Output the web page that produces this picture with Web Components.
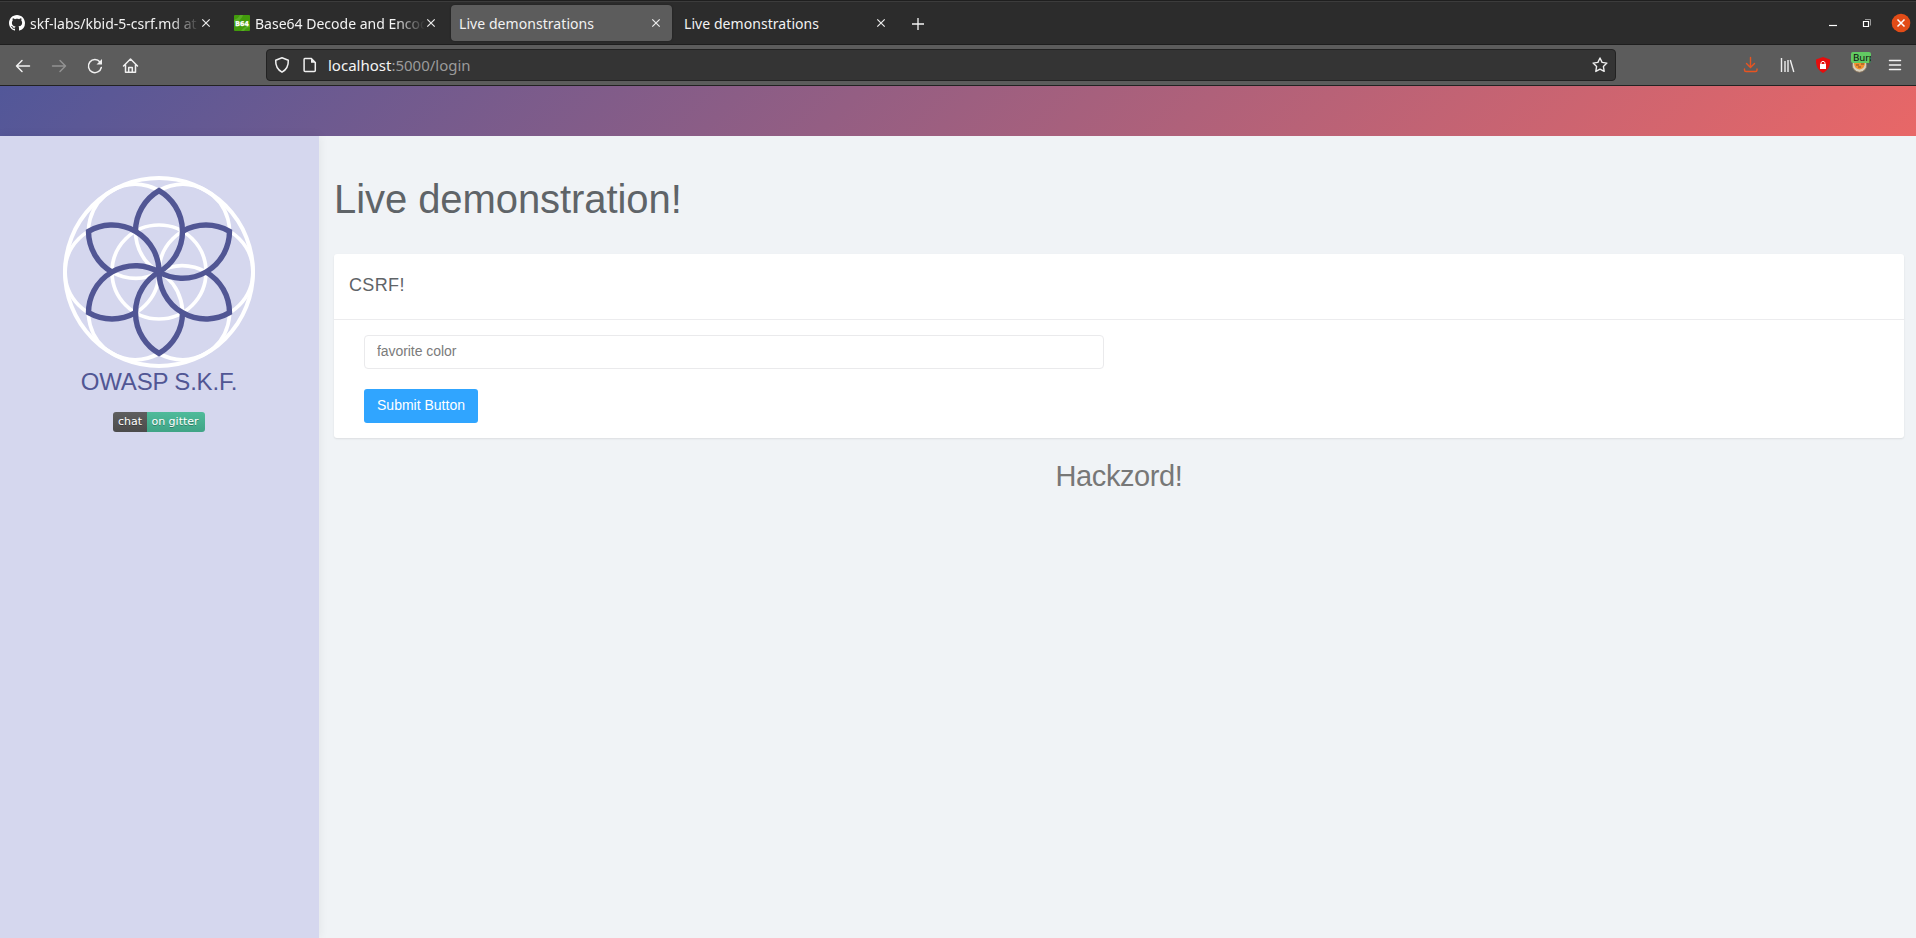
<!DOCTYPE html>
<html lang="en">
<head>
<meta charset="utf-8">
<title>Live demonstrations</title>
<style>
html, body { margin: 0; height: 100%; overflow: hidden; }
body { font-family: "Liberation Sans", Arial, sans-serif; background: #f0f3f6; }
</style>
</head>
<body>
<demo-window></demo-window>
<script>
const define = (name, html) => {
  const t = document.createElement('template');
  t.innerHTML = html;
  customElements.define(name, class extends HTMLElement {
    constructor() {
      super();
      this.attachShadow({ mode: 'open' }).append(t.content.cloneNode(true));
    }
  });
};

define('browser-tab', `
<style>
:host { display: flex; align-items: center; box-sizing: border-box; width: 221px; height: 36px; padding: 0 8px; margin-right: 4px; border-radius: 4px; color: #f2f2f2; font: 14px "Noto Sans", "Open Sans", sans-serif; }
:host([active]) { background: #5c5c5c; box-shadow: 0 0 2px #1c1c1c; }
.label { flex: 1; overflow: hidden; white-space: nowrap; line-height: 20px; padding-top: 2px; letter-spacing: var(--ls, .06px); }
:host([fade]) .label { margin-right: -2px; -webkit-mask-image: linear-gradient(to right, #000 calc(100% - 30px), transparent); mask-image: linear-gradient(to right, #000 calc(100% - 30px), transparent); }
svg { flex: none; display: block; }
</style>
<slot name="icon"></slot>
<span class="label"><slot></slot></span>
<svg width="16" height="16" viewBox="0 0 16 16"><path d="M4.300 4.300l7.400 7.400M11.700 4.300l-7.400 7.400" stroke="#ececec" stroke-width="1.200"/></svg>
`);

define('tab-strip', `
<style>
:host { display: flex; box-sizing: border-box; height: 45px; padding: 5px 0 0 1px; background: #2c2c2c; border-bottom: 1px solid #1e1e1e; box-shadow: inset 0 1px #1f1f1f, inset 0 2px #3c3c3c; }
.icon { margin-right: 5px; flex: none; }
.plus { margin: 11px 0 0 9px; }
.controls { display: flex; margin-left: auto; padding-top: 8px; }
</style>
<browser-tab fade style="--ls:0">
<svg class="icon" slot="icon" width="16" height="16" viewBox="0 0 16 16"><path fill="#fff" d="M8 0C3.58 0 0 3.58 0 8c0 3.54 2.29 6.53 5.47 7.59.4.07.55-.17.55-.38 0-.19-.01-.82-.01-1.49-2.01.37-2.53-.49-2.69-.94-.09-.23-.48-.94-.82-1.13-.28-.15-.68-.52-.01-.53.63-.01 1.08.58 1.23.82.72 1.21 1.87.87 2.33.66.07-.52.28-.87.51-1.07-1.78-.2-3.64-.89-3.64-3.95 0-.87.31-1.59.82-2.15-.08-.2-.36-1.02.08-2.12 0 0 .67-.21 2.2.82.64-.18 1.32-.27 2-.27s1.36.09 2 .27c1.53-1.04 2.2-.82 2.2-.82.44 1.1.16 1.92.08 2.12.51.56.82 1.27.82 2.15 0 3.07-1.87 3.75-3.65 3.95.29.25.54.73.54 1.48 0 1.07-.01 1.93-.01 2.2 0 .21.15.46.55.38A8.01 8.01 0 0 0 16 8c0-4.42-3.58-8-8-8z"/></svg>skf-labs/kbid-5-csrf.md at main</browser-tab>
<browser-tab fade style="--ls:0">
<svg class="icon" slot="icon" width="16" height="16" viewBox="0 0 16 16"><rect width="16" height="16" rx="1" fill="#429b0b"/><path d="M0 5C3 4 5 2 6 0h3C8 4 4 7 0 8zM16 10c-4 1-7 3-9 6h3c2-3 4-4 6-4z" fill="#58ad25"/><text x="8" y="10.500" text-anchor="middle" textLength="13.500" lengthAdjust="spacingAndGlyphs" font-family="DejaVu Sans" font-weight="bold" font-size="6.500" fill="#fff" stroke="#fff" stroke-width=".3">B64</text></svg>Base64 Decode and Encode</browser-tab>
<browser-tab active>Live demonstrations</browser-tab>
<browser-tab>Live demonstrations</browser-tab>
<svg class="plus" width="16" height="16" viewBox="0 0 16 16"><path d="M8 2v12M2 8h12" stroke="#f4f4f4" stroke-width="1.300"/></svg>
<div class="controls">
<svg width="96" height="20" viewBox="0 0 96 20"><path d="M9 12.500h8" stroke="#fff" stroke-width="1.200"/><path d="M43.500 8.500h5v5h-5z" fill="none" stroke="#fff" stroke-width="1.200"/><path d="M45 6.500h5.500v6" fill="none" stroke="#999"/><circle cx="81" cy="10" r="9.300" fill="#e24c17"/><path d="M77.500 6.500l7 7M84.500 6.500l-7 7" stroke="#fff" stroke-width="1.500"/></svg>
</div>
`);

define('nav-bar', `
<style>
:host { display: flex; box-sizing: border-box; height: 41px; background: #5c5c5c; border-bottom: 1px solid #222; color: #f4f4f4; }
.left { width: 266px; flex: none; }
.url { display: flex; align-items: center; box-sizing: border-box; width: 1350px; height: 32px; margin-top: 4px; padding-left: 7px; background: #343434; border: 1px solid #222; border-radius: 4px; font: 15px/20px "Noto Sans", "Open Sans", sans-serif; }
.url span { color: #9b9b9b; }
.url p { flex: 1; margin: 0 0 0 10px; }
.url .star { margin-right: 7px; }
.ext { position: relative; width: 300px; }
.burp { position: absolute; left: 235px; top: 7px; width: 20px; height: 11px; border-radius: 2px; overflow: hidden; background: #62ca62; color: #111; font: 9.500px/11px "DejaVu Sans", sans-serif; text-indent: 2px; letter-spacing: -.2px; }
svg { display: block; fill: none; }
</style>
<svg class="left" width="266" height="40" viewBox="0 0 266 40"><g fill="none" stroke="#f0f0f0" stroke-width="1.500" stroke-linecap="round" stroke-linejoin="round"><path d="M29.500 21h-13M22 15.500l-5.500 5.500L22 26.500"/><path d="M52.500 21h13M60 15.500l5.500 5.500L60 26.500" stroke="#929292"/><path d="M100 17A6.500 6.500 0 1 0 101.300 22.500"/><path d="M96.500 19.500h5.500v-5.500z" fill="#f0f0f0" stroke="none"/><path d="M123.500 21L130.500 14l7 7M125.500 20v7.200h10V20M128.700 27v-4.500h3.600V27"/></g></svg>
<div class="url">
<svg width="16" height="18" viewBox="0 0 16 18"><path d="M8 1.800L14.300 4.300C14.500 9 13 13.500 8 16.200 3 13.500 1.500 9 1.700 4.300z" stroke="#f0f0f0" stroke-width="1.500" stroke-linejoin="round"/></svg>
<svg width="16" height="18" viewBox="0 0 16 18" style="margin-left:12px"><path d="M2.800 2.500h6.500l4 4v8q0 1-1 1h-9.200q-1 0-1-1v-11q0-1 .700-1z" stroke="#f0f0f0" stroke-width="1.500"/><path d="M9 2.500v4.300h4.500z" fill="#f0f0f0"/></svg>
<p>localhost<span>:5000/login</span></p>
<svg class="star" width="16" height="16" viewBox="0 0 16 16"><path d="M8 1l2.100 4.400 4.800.7-3.500 3.400.8 4.900L8 12.100l-4.200 2.300.8-4.900L1.100 6.100l4.800-.7z" stroke="#eee" stroke-width="1.400" stroke-linejoin="round"/></svg>
</div>
<div class="ext">
<svg width="300" height="40" viewBox="0 0 300 40"><g fill="none" stroke="#e95420" stroke-width="1.400" stroke-linecap="round"><path d="M134.500 12.500v9.500M130.500 18.500l4 4 4-4M128.500 24v1q0 1.500 1.500 1.500h9.500q1.500 0 1.500-1.500V24"/></g><path d="M165.500 13v14M169 16v11M172 15v12M174.300 15l3.500 12" stroke="#eee" stroke-width="1.400"/><path d="M207 12l7 2.500c.3 6-1.500 10.500-7 13.500-5.500-3-7.300-7.500-7-13.500z" fill="#e60d0d"/><rect x="204" y="19" width="6" height="5" fill="#fff"/><path d="M205 19.500v-2q2-2.600 4 0v2" stroke="#fff"/><circle cx="243.500" cy="20" r="7.200" fill="#d7d0bd" stroke="#8e765c" stroke-width=".8"/><path d="M238 18h11q0 5.500-5.500 6.500-5.500-1-5.500-6.500z" fill="#f1902e"/><path d="M240 20h3m2-1h3m-6 3h3" stroke="#835126"/><path d="M273.500 15.500h11M273.500 20h11M273.500 24.500h11" stroke="#f2f2f2" stroke-width="1.500" stroke-linecap="round"/></svg>
<div class="burp">Burp</div>
</div>
`);

customElements.define('skf-flower', class extends HTMLElement {
  constructor() {
    super();
    const root = this.attachShadow({ mode: 'open' });
    let rings = '', petals = '';
    for (let a = 0; a < 360; a += 60) {
      rings += `<circle cx="47" r="47" transform="rotate(${a})"/>`;
      petals += `<path transform="rotate(${a})" d="M-23.500-40.700A47 47 0 0 1 0-81.400A47 47 0 0 1 0 0"/>`;
    }
    root.innerHTML = `<style>:host{display:block;width:194px;height:194px}svg{display:block}</style>
<svg width="194" height="194" viewBox="-97 -97 194 194" fill="none"><g stroke="#fff" stroke-width="3.700"><circle r="94" stroke-width="4"/><circle r="47"/>${rings}</g><g stroke="#515694" stroke-width="5.400">${petals}</g></svg>`;
  }
});

define('gitter-badge', `
<style>
:host { display: flex; width: 92px; height: 20px; border-radius: 3px; overflow: hidden; color: #fff; font: 11px/20px "DejaVu Sans", sans-serif; text-shadow: 0 1px rgba(1,1,1,.3); text-align: center; }
span { background: linear-gradient(#5f5f5f, #4b4b4b); width: 34px; }
b { font-weight: normal; flex: 1; padding-right: 2px; background: linear-gradient(#4fbb9a, #40a486); }
</style><span>chat</span><b>on gitter</b>
`);

define('side-bar', `
<style>
:host { display: flex; flex-direction: column; align-items: center; box-sizing: border-box; width: 319px; padding: 39px 1px 0 0; background: #d5d7ee; box-shadow: 0 0 10px rgba(0,0,0,.07); z-index: 1; }
h2 { margin: -1px 0 16px; font-weight: normal; font-size: 24px; line-height: 28px; color: #515694; letter-spacing: -.2px; }
</style>
<skf-flower></skf-flower><h2>OWASP S.K.F.</h2><gitter-badge></gitter-badge>
`);

define('demo-card', `
<style>
:host { display: block; box-sizing: border-box; height: 184px; background: #fff; border-radius: 3px; box-shadow: 0 1px 2px rgba(0,0,0,.09); }
header { box-sizing: border-box; height: 66px; padding: 20px 15px; border-bottom: 1px solid #ececee; font-size: 18px; line-height: 22px; color: #5f6468; letter-spacing: .35px; }
form { padding: 15px 30px; display: flex; flex-direction: column; align-items: flex-start; gap: 20px; }
input { box-sizing: border-box; width: 740px; height: 34px; padding: 0 12px 2px; border: 1px solid #eaeaec; border-radius: 4px; font: 14px "Liberation Sans", Arial, sans-serif; letter-spacing: -.06px; background: #fff; }
input::placeholder { color: #7b7b7b; opacity: 1; }
button { width: 114px; height: 34px; padding: 0 0 2px; border: 0; border-radius: 3px; background: #30a5ff; color: #fff; font: 14px "Liberation Sans", Arial, sans-serif; white-space: nowrap; }
</style>
<header>CSRF!</header>
<form><input placeholder="favorite color"><button type="button">Submit Button</button></form>
`);

define('demo-window', `
<style>
:host { display: flex; flex-direction: column; height: 100vh; }
.banner { height: 50px; flex: none; background: linear-gradient(135deg, #525799, #e86767); }
.page { display: flex; flex: 1; }
main { flex: 1; padding: 40px 12px 0 15px; }
h1 { margin: 0 0 31px; font-weight: normal; font-size: 40px; line-height: 47px; color: #5f6468; letter-spacing: -.07px; }
p { margin: 22px 0 0; text-align: center; font-size: 29px; line-height: 32px; color: #777; letter-spacing: -.4px; }
</style>
<tab-strip></tab-strip><nav-bar></nav-bar><div class="banner"></div>
<div class="page"><side-bar></side-bar><main><h1>Live demonstration!</h1><demo-card></demo-card><p>Hackzord!</p></main></div>
`);
</script>
</body>
</html>
